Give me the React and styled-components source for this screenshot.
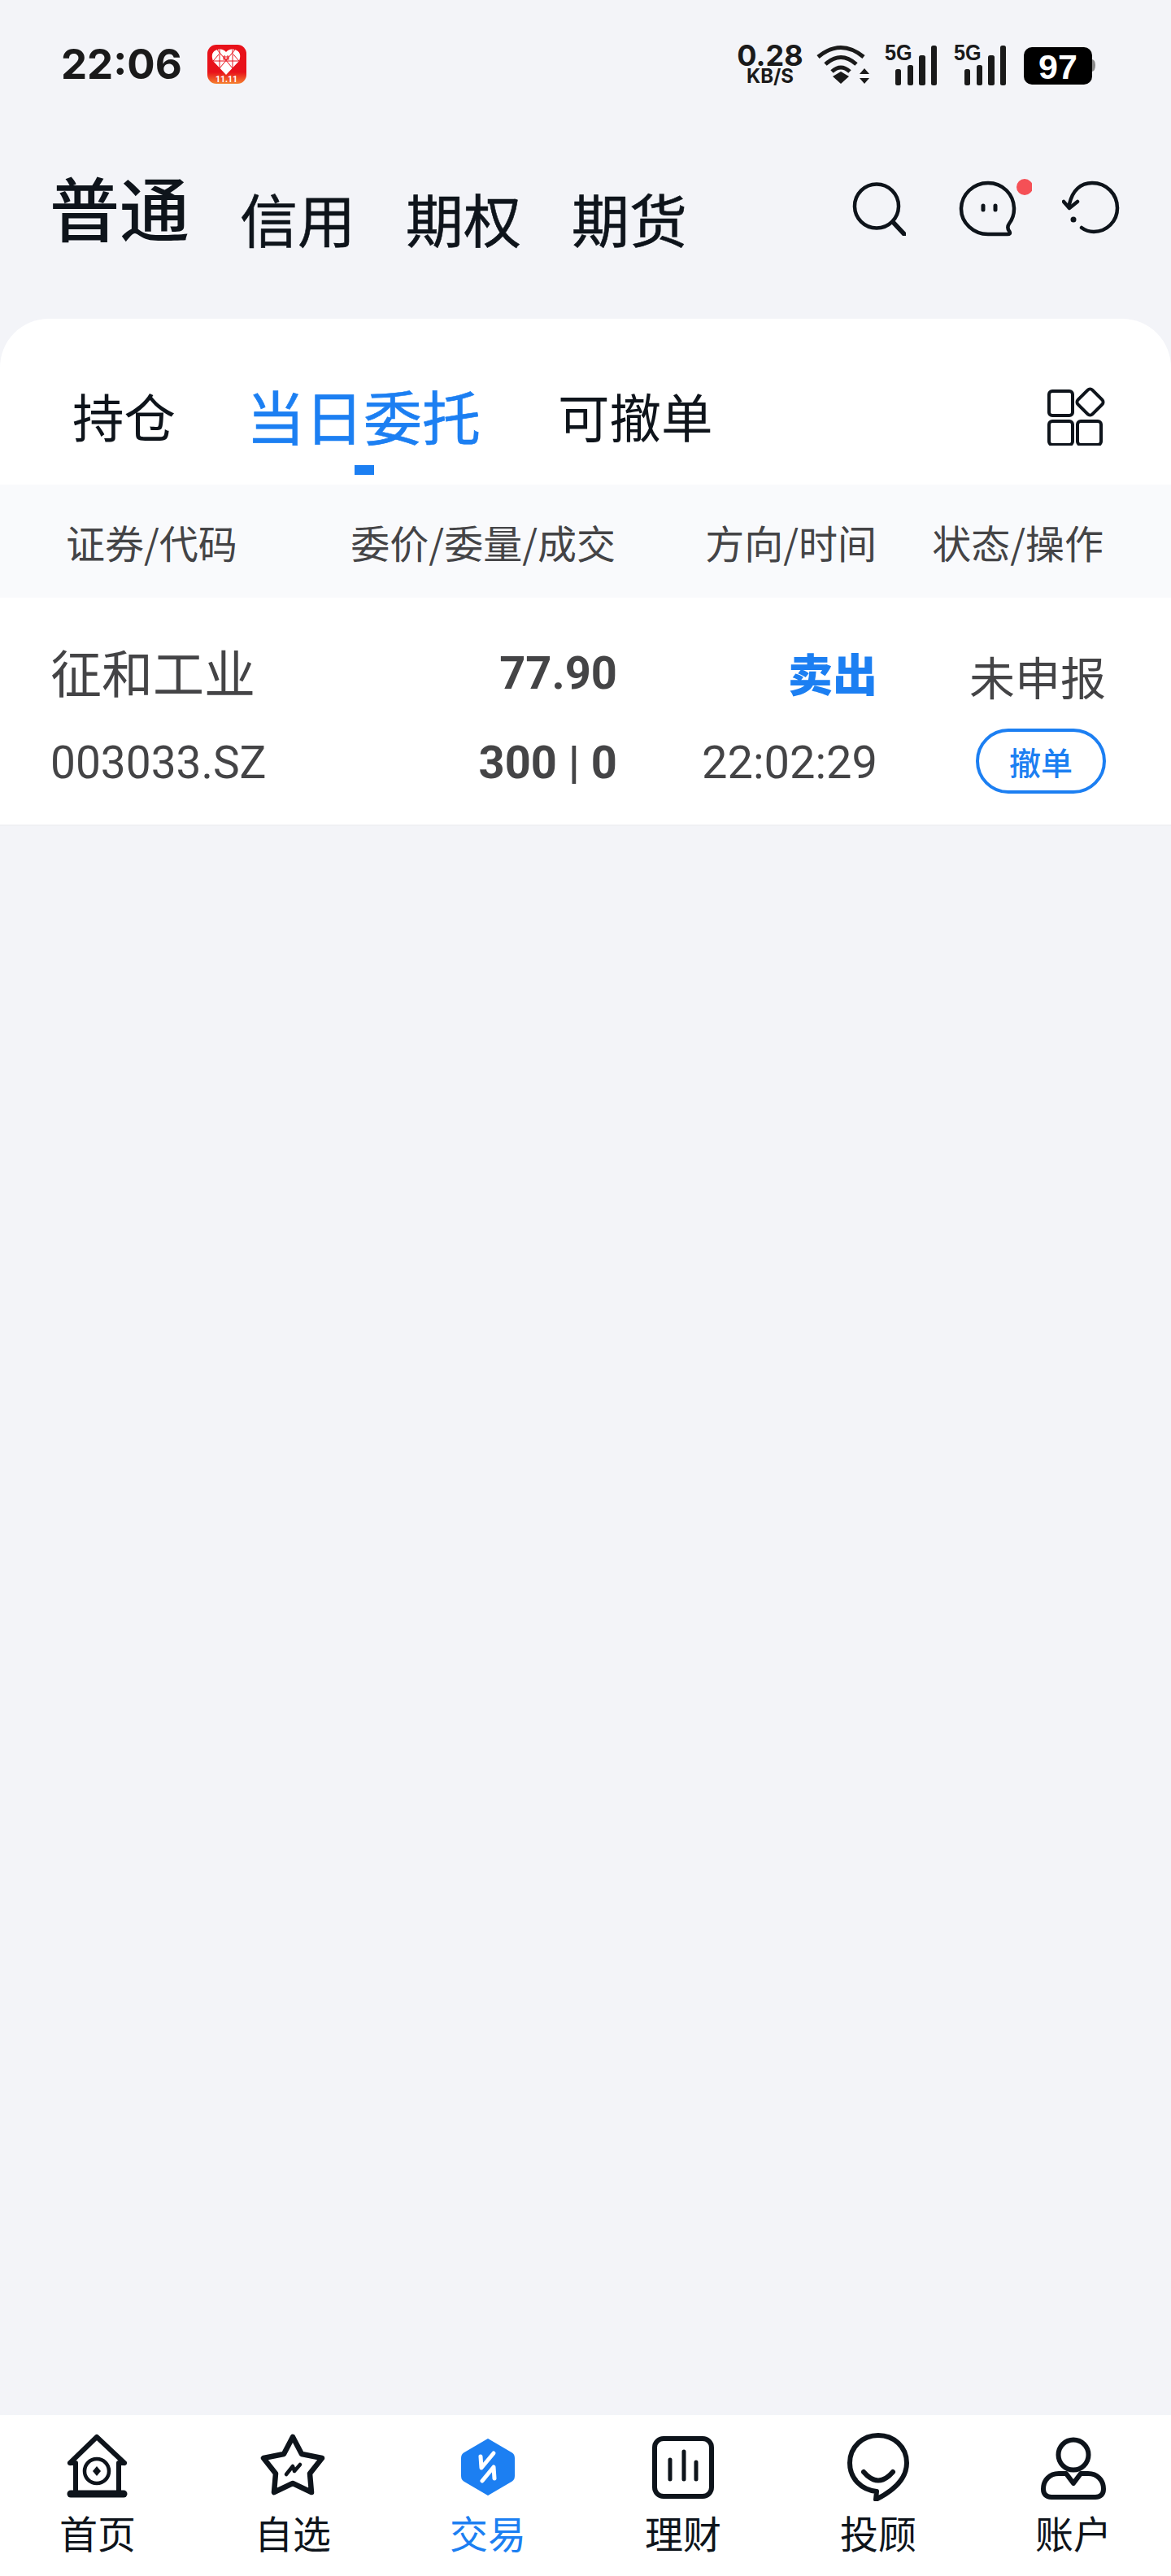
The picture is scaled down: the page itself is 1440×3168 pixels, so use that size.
import React from "react";
import styled, { createGlobalStyle } from "styled-components";

const CJK = `"Noto Sans CJK SC", "Noto Sans", sans-serif`;
const NUM = `Roboto, "Noto Sans CJK SC", sans-serif`;
const BLUE = "#1c7ff2";
const INK = "#0e141b";
const GREY = "#444446";
const DARK = "#1a1a1a";

const GlobalStyles = createGlobalStyle`
  html, body { margin: 0; padding: 0; background: #f3f4f8; }
  * { box-sizing: border-box; }
`;

const Page = styled.div`
  width: 1440px;
  height: 3168px;
  display: flex;
  flex-direction: column;
  background: #f3f4f8;
  font-family: ${CJK};
  overflow: hidden;
`;

const StatusBar = styled.div`
  height: 104px;
  padding: 52px 93px 0 75px;
  display: flex;
  justify-content: space-between;
  align-items: flex-start;
`;

const StatusLeft = styled.div`
  display: flex;
  align-items: center;
  gap: 31px;
  height: 54px;
`;

const Clock = styled.span`
  font: 700 51px/54px Inter, sans-serif;
  color: ${DARK};
`;

const StatusRight = styled.div`
  display: flex;
  align-items: flex-start;
`;

const Speed = styled.div`
  width: 78px;
  margin-right: 17px;
  display: flex;
  flex-direction: column;
  align-items: center;
  color: ${DARK};
`;

const SpeedValue = styled.span`
  font: 700 36px/32px Inter, sans-serif;
`;

const SpeedUnit = styled.span`
  font: 700 24px/20px Inter, sans-serif;
`;

const StatusSlot = styled.div`
  position: relative;
  display: flex;
  margin-top: 3px;
  margin-right: ${(p) => p.$gap || 0}px;
`;

const NetLabel = styled.span`
  position: absolute;
  left: 0;
  top: -4px;
  font: 700 28px/27px "Liberation Sans", sans-serif;
  color: ${DARK};
  transform: scaleX(0.9);
  transform-origin: left center;
`;

const TitleBar = styled.div`
  height: 288px;
  padding: 100px 62px 0 61px;
  display: flex;
  justify-content: space-between;
  align-items: flex-start;
`;

const Markets = styled.div`
  display: flex;
  align-items: flex-start;
  gap: 62px;
`;

const Market = styled.span`
  margin-top: ${(p) => (p.$active ? 0 : 13)}px;
  font-size: ${(p) => (p.$active ? "86px" : "71px")};
  font-weight: ${(p) => (p.$active ? 500 : 400)};
  line-height: 100px;
  color: ${INK};
  -webkit-text-stroke: ${(p) => (p.$active ? 0 : "0.6px")} ${INK};
`;

const Tools = styled.div`
  display: flex;
  align-items: flex-start;
  margin-top: 16px;
`;

const ToolButton = styled.div`
  display: flex;
  margin-left: ${(p) => p.$gap}px;
  margin-top: ${(p) => p.$top || 0}px;
`;

const Card = styled.div`
  background: #fff;
  border-radius: 60px 60px 0 0;
`;

const TabBar = styled.div`
  height: 204px;
  padding: 73px 80px 0 89px;
  display: flex;
  align-items: flex-start;
`;

const Tab = styled.div`
  position: relative;
  margin-right: ${(p) => p.$gap}px;
  font-size: ${(p) => (p.$active ? "72px" : "63.5px")};
  line-height: 90px;
  color: ${(p) => (p.$active ? BLUE : INK)};
  -webkit-text-stroke: ${(p) => (p.$active ? "0.6px" : 0)} ${BLUE};
`;

const TabMark = styled.span`
  position: absolute;
  left: 133px;
  top: 107px;
  width: 24px;
  height: 12px;
  background: ${BLUE};
`;

const GridButton = styled.div`
  margin-left: auto;
  display: flex;
  margin-top: 10px;
`;

const Columns = styled.div`
  display: grid;
  grid-template-columns: 343px 354px 320px 281px;
  padding: 0 80px 0 62px;
`;

const HeadRow = styled(Columns)`
  height: 139px;
  align-items: center;
  background: #f9fafc;
  font-size: 48px;
  color: ${GREY};
`;

const HeadCell = styled.div`
  line-height: 60px;
  white-space: nowrap;
  text-align: ${(p) => (p.$left ? "left" : "right")};
  padding-left: ${(p) => (p.$left ? "19px" : 0)};
  padding-right: ${(p) => p.$inset || 0}px;
`;

const OrderRow = styled(Columns)`
  height: 281px;
  border-bottom: 2px solid #f0f1f4;
  color: ${GREY};
`;

const Cell = styled.div`
  display: flex;
  flex-direction: column;
  align-items: ${(p) => (p.$left ? "flex-start" : "flex-end")};
`;

const Name = styled.span`
  margin-top: 48px;
  font-size: 63px;
  line-height: 84px;
`;

const Figure = styled.span`
  margin-top: ${(p) => p.$top}px;
  font-family: ${NUM};
  font-size: ${(p) => p.$size || 56}px;
  line-height: 70px;
  font-weight: ${(p) => (p.$bold ? 700 : 400)};
  white-space: nowrap;
`;

const Side = styled.span`
  margin-top: 53px;
  font-size: 55px;
  line-height: 77px;
  font-weight: 900;
  color: ${BLUE};
`;

const Status = styled.span`
  margin-top: 56px;
  font-size: 56px;
  line-height: 80px;
`;

const CancelButton = styled.button`
  margin-top: 25px;
  width: 160px;
  height: 80px;
  border: 4px solid ${BLUE};
  border-radius: 40px;
  background: #fff;
  color: ${BLUE};
  font-family: ${CJK};
  font-size: 39px;
  font-weight: 500;
  line-height: 1;
  padding: 0;
`;

const TabNav = styled.div`
  margin-top: auto;
  height: 198px;
  background: #fff;
  display: grid;
  grid-template-columns: repeat(6, 1fr);
`;

const NavItem = styled.div`
  display: flex;
  flex-direction: column;
  align-items: center;
  color: ${(p) => (p.$active ? BLUE : INK)};
`;

const NavIcon = styled.div`
  height: 115px;
  padding-top: 18px;
  display: flex;
  align-items: flex-start;
  justify-content: center;
`;

const NavLabel = styled.span`
  font-size: 47px;
  line-height: 58px;
`;

const Line = { fill: "none", stroke: INK, strokeLinecap: "round", strokeLinejoin: "round" };

const PddIcon = () => (
  <svg width="48" height="48" viewBox="0 0 48 48">
    <defs>
      <linearGradient id="pdd" x1="0" y1="0" x2="0" y2="1">
        <stop offset="0.7" stopColor="#e8111a" />
        <stop offset="1" stopColor="#f5812f" />
      </linearGradient>
    </defs>
    <rect width="48" height="48" rx="11" fill="url(#pdd)" />
    <path d="M23 37 L7 20 Q3 9 12 6 Q19 4 23 9 Q27 4 34 6 Q43 9 39 20 Z" fill="#fff" />
    <g stroke="#e8111a" strokeWidth="1" fill="none">
      <path d="M12 6 L31 29 M34 6 L15 29 M7 20 L14 12 M39 20 L32 12 M7 20 L39 20 M15 6 L15 29 M31 6 L31 29" />
      <path d="M21 13 L21 19 M25 13 L25 19 M19 15 L27 15 M19 17.500 L27 17.500" />
    </g>
    <text x="23.500" y="46" textAnchor="middle" fontFamily="Roboto, sans-serif" fontSize="10.500" fontWeight="700" fill="#fff">11.11</text>
  </svg>
);

const WifiIcon = () => (
  <svg width="67" height="49" viewBox="0 0 67 49">
    <g fill="none" stroke={DARK} strokeWidth="5">
      <path d="M3 15 Q31 -8 59 15" />
      <path d="M12 24 Q31 7 50 24" />
      <path d="M20 33 Q31 23 42 33" />
    </g>
    <path d="M21 39 L31 33 L41 39 L31 48 Z" fill={DARK} />
    <path d="M60 29 L66 36 L54 36 Z M54 41 L66 41 L60 48 Z" fill={DARK} />
  </svg>
);

const SignalIcon = () => (
  <svg width="65" height="50" viewBox="0 0 65 50">
    <rect x="13" y="30" width="7" height="20" rx="2.500" fill={DARK} />
    <rect x="28" y="25" width="7" height="25" rx="2.500" fill={DARK} />
    <rect x="42" y="13" width="8" height="37" rx="2.500" fill={DARK} />
    <rect x="57" y="1" width="7" height="49" rx="2.500" fill={DARK} />
  </svg>
);

const BatteryIcon = () => (
  <svg width="88" height="50" viewBox="0 0 88 50">
    <rect x="0" y="3" width="84" height="46" rx="10" fill="#000" />
    <path d="M84 18 Q88 19 88 25 Q88 32 84 33 Z" fill="#8a8a8a" />
    <text x="42" y="42" textAnchor="middle" fontFamily="Liberation Sans, sans-serif" fontWeight="700" fontSize="43" fill="#fff">97</text>
  </svg>
);

const SearchIcon = () => (
  <svg width="66" height="66" viewBox="0 0 66 66">
    <g {...Line} strokeWidth="4.500">
      <circle cx="30" cy="29.500" r="27" />
      <path d="M50 49 L64 64" strokeWidth="5.500" />
    </g>
  </svg>
);

const ChatIcon = () => (
  <svg width="90" height="72" viewBox="0 0 90 72">
    <g {...Line} strokeWidth="4.500">
      <path d="M36 68 L60 68 Q64 68 62.500 65 Q58.500 60 62 55 Q68 47 68 37 C68 19 54 5 36 5 C18 5 3 19 3 37 C3 54 18 68 36 68 Z" />
      <path d="M30 33 L30 38 M45 33 L45 38" strokeWidth="5" />
    </g>
    <circle cx="81" cy="10" r="10" fill="#f55056" />
  </svg>
);

const RefreshIcon = () => (
  <svg width="72" height="66" viewBox="0 0 72 66">
    <g {...Line} strokeWidth="4.500">
      <path d="M9 29 C13 12 23 3 37 3 C55 3 68 17 68 34 C68 50 55 63 39 63 C33 63 28 61 24 58" />
      <path d="M2 26 L9 34 L19 26" />
    </g>
    <circle cx="14" cy="48" r="3.500" fill={INK} />
  </svg>
);

const GridIcon = () => (
  <svg width="72" height="73" viewBox="0 0 72 73">
    <g fill="none" stroke={INK} strokeWidth="4">
      <rect x="2" y="6" width="29" height="30" rx="4" />
      <rect x="2" y="43" width="29" height="29" rx="4" />
      <rect x="37" y="43" width="29" height="29" rx="4" />
      <rect x="40" y="7" width="25" height="25" rx="4" transform="rotate(45 52.500 19.500)" />
    </g>
  </svg>
);

// every nav icon sits in an 88px tall box, viewBox min-y shifts the drawing down
const HomeIcon = () => (
  <svg width="76" height="88" viewBox="0 -5 76 88">
    <g {...Line} strokeWidth="6">
      <path d="M4 36 L37 4 L71 36 M4 36 L10 36 M64 36 L71 36 M11 36 L11 74 M64 36 L64 74" />
      <path d="M5 74 L70 74" strokeWidth="9" />
      <circle cx="37" cy="46" r="15" strokeWidth="4.500" />
    </g>
    <path d="M37 40 L42 46 L37 52 L32 46 Z" fill={INK} />
  </svg>
);

const StarIcon = () => (
  <svg width="82" height="88" viewBox="0 -4 82 88">
    <g {...Line} strokeWidth="6.500">
      <path d="M41 5 L52 26 L77 31 L62 50 L64 73 L41 62 L18 73 L20 50 L5 31 L30 26 Z" />
      <path d="M33 51 L41 41 L43 47 L50 39" strokeWidth="4.500" />
    </g>
  </svg>
);

const TradeIcon = () => (
  <svg width="66" height="88" viewBox="0 -10 66 88">
    <path d="M33 2 L62 19 Q65 21 65 25 L65 47 Q65 51 62 53 L33 70 L4 53 Q1 51 1 47 L1 25 Q1 21 4 19 Z" fill={BLUE} stroke={BLUE} strokeLinejoin="round" strokeWidth="2" />
    <g fill="none" stroke="#fff" strokeWidth="5" strokeLinecap="round" strokeLinejoin="round">
      <path d="M24 23 L25 37 L40 19" />
      <path d="M26 53 L40 36 L41 50" />
    </g>
  </svg>
);

const ChartIcon = () => (
  <svg width="76" height="88" viewBox="0 -8 76 88">
    <g {...Line} strokeWidth="6">
      <rect x="3" y="3" width="70" height="71" rx="11" />
      <path d="M22 29 L22 53 M39 19 L39 53 M54 32 L54 53" strokeWidth="5" />
    </g>
  </svg>
);

const AdvisorIcon = () => (
  <svg width="78" height="88" viewBox="0 -3 78 88">
    <g {...Line} strokeWidth="6">
      <path d="M36 83 L37 73 C18 71 4 57 4 38 C4 18 20 4 39 4 C58 4 74 18 74 38 C74 58 58 72 36 83 Z" />
      <path d="M21 49 Q39 70 57 49" />
    </g>
  </svg>
);

const UserIcon = () => (
  <svg width="86" height="88" viewBox="0 -9 86 88">
    <g {...Line} strokeWidth="6">
      <circle cx="43" cy="22" r="18.500" />
      <path d="M25 45 L34 45 L43 57 L52 45 L61 45 C72 45 80 53 80 64 C80 70 77 74 70 74 L16 74 C9 74 6 70 6 64 C6 53 14 45 25 45 Z" />
    </g>
  </svg>
);

const navItems = [
  { label: "首页", icon: <HomeIcon /> },
  { label: "自选", icon: <StarIcon /> },
  { label: "交易", icon: <TradeIcon />, active: true },
  { label: "理财", icon: <ChartIcon /> },
  { label: "投顾", icon: <AdvisorIcon /> },
  { label: "账户", icon: <UserIcon /> },
];

function App() {
  return (
    <Page>
      <GlobalStyles />
      <StatusBar>
        <StatusLeft>
          <Clock>22:06</Clock>
          <PddIcon />
        </StatusLeft>
        <StatusRight>
          <Speed>
            <SpeedValue>0.28</SpeedValue>
            <SpeedUnit>KB/S</SpeedUnit>
          </Speed>
          <StatusSlot $gap={18}><WifiIcon /></StatusSlot>
          <StatusSlot $gap={20}><NetLabel>5G</NetLabel><SignalIcon /></StatusSlot>
          <StatusSlot $gap={21}><NetLabel>5G</NetLabel><SignalIcon /></StatusSlot>
          <StatusSlot><BatteryIcon /></StatusSlot>
        </StatusRight>
      </StatusBar>

      <TitleBar>
        <Markets>
          <Market $active>普通</Market>
          <Market>信用</Market>
          <Market>期权</Market>
          <Market>期货</Market>
        </Markets>
        <Tools>
          <ToolButton $gap={0} $top={4}><SearchIcon /></ToolButton>
          <ToolButton $gap={65}><ChatIcon /></ToolButton>
          <ToolButton $gap={37} $top={2}><RefreshIcon /></ToolButton>
        </Tools>
      </TitleBar>

      <Card>
        <TabBar>
          <Tab $gap={87}>持仓</Tab>
          <Tab $active $gap={95}>当日委托<TabMark /></Tab>
          <Tab $gap={0}>可撤单</Tab>
          <GridButton><GridIcon /></GridButton>
        </TabBar>
        <HeadRow>
          <HeadCell $left>证券/代码</HeadCell>
          <HeadCell $inset={2}>委价/委量/成交</HeadCell>
          <HeadCell $inset={1}>方向/时间</HeadCell>
          <HeadCell $inset={3}>状态/操作</HeadCell>
        </HeadRow>
        <OrderRow>
          <Cell $left>
            <Name>征和工业</Name>
            <Figure $top={36} $size={55}>003033.SZ</Figure>
          </Cell>
          <Cell>
            <Figure $bold $top={58}>77.90</Figure>
            <Figure $bold $top={40}>300 | 0</Figure>
          </Cell>
          <Cell>
            <Side>卖出</Side>
            <Figure $top={38}>22:02:29</Figure>
          </Cell>
          <Cell>
            <Status>未申报</Status>
            <CancelButton>撤单</CancelButton>
          </Cell>
        </OrderRow>
      </Card>

      <TabNav>
        {navItems.map((item) => (
          <NavItem key={item.label} $active={item.active}>
            <NavIcon>{item.icon}</NavIcon>
            <NavLabel>{item.label}</NavLabel>
          </NavItem>
        ))}
      </TabNav>
    </Page>
  );
}

export default App;
